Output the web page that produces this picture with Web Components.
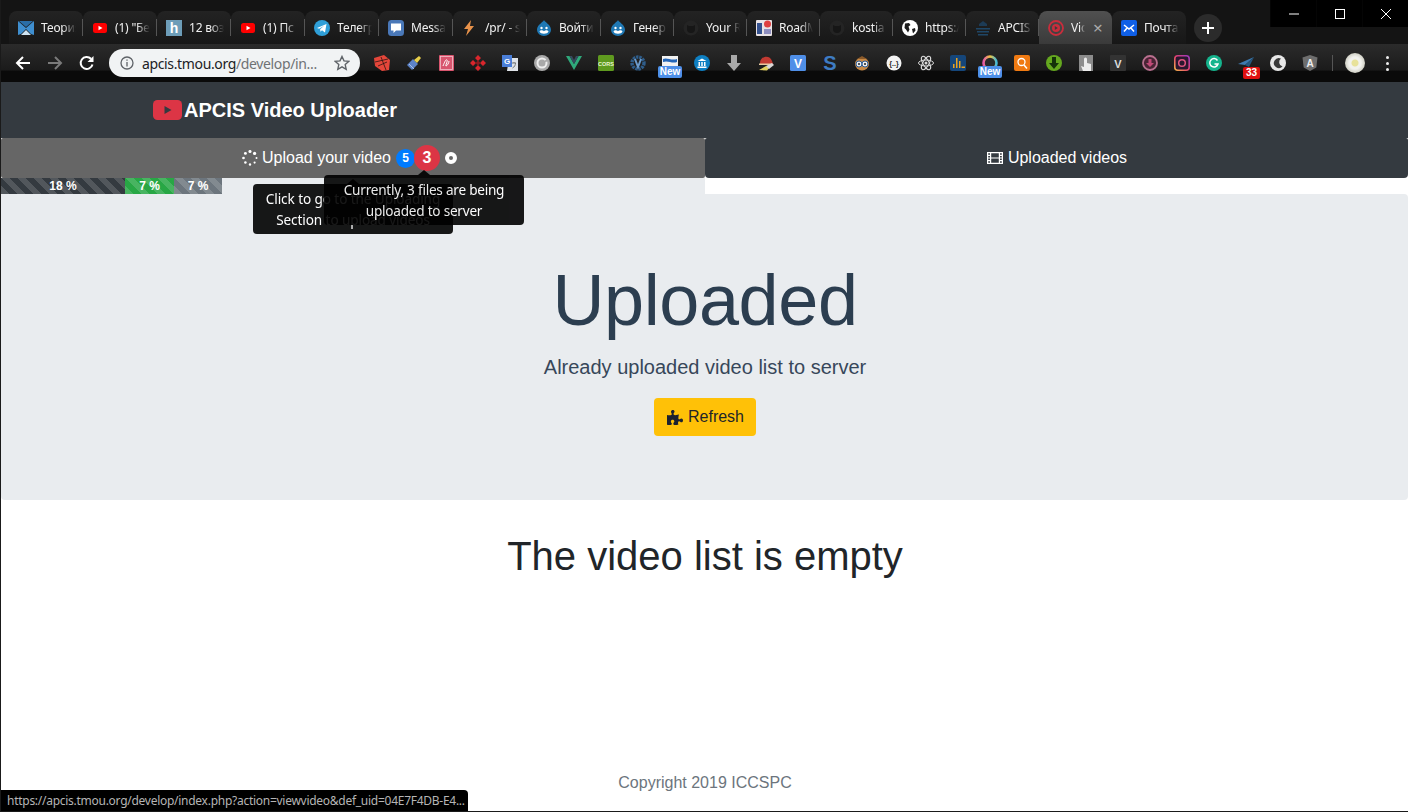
<!DOCTYPE html>
<html lang="en">
<head>
<meta charset="utf-8">
<title>APCIS Video Uploader</title>
<style>
  html, body { margin: 0; height: 100%; background: #fff; overflow: hidden; }
  body { font-family: "Liberation Sans", Arial, sans-serif; }
</style>
</head>
<body>
<app-window>
  <browser-chrome></browser-chrome>
  <site-navbar></site-navbar>
  <upload-tabs></upload-tabs>
  <hero-panel>
    <span slot="title">Uploaded</span>
    <span slot="lead">Already uploaded video list to server</span>
  </hero-panel>
  <empty-list>The video list is empty</empty-list>
  <site-footer>Copyright 2019 ICCSPC</site-footer>
  <status-bubble>https://apcis.tmou.org/develop/index.php?action=viewvideo&amp;def_uid=04E7F4DB-E4...</status-bubble>
</app-window>

<script>
// favicons of the tab strip
var FAVICONS = {
  mix: '<path d="M0 1l8 7 8-7v14l-3-1-5-5-5 5-3 1z" fill="#3f8fd0"/><path d="M1 1h14L8 7z" fill="#2a6ea8"/><path d="M3 15l5-5 5 5z" fill="#cfe4f2"/>',
  yt: '<rect x="1" y="3" width="14" height="10" rx="2.5" fill="#f00"/><path d="M6.5 5.8L10.5 8l-4 2.2z" fill="#fff"/>',
  h: '<rect width="16" height="16" fill="#6d9db8"/><text x="8" y="13" text-anchor="middle" font-family="Liberation Sans" font-weight="700" font-size="14" fill="#fff">h</text>',
  tg: '<circle cx="8" cy="8" r="8" fill="#2f9fd8"/><path d="M3 8l9.5-4-1.5 8.500-3-2.200-1.500 1.500-.4-2.600 4-3.500-5 3z" fill="#fff"/>',
  msg: '<rect width="16" height="16" rx="3.500" fill="#4a78b8"/><path d="M3 3.500h10v7H8l-2.500 2.500v-2.500H3z" fill="#fff"/>',
  bolt: '<path d="M9 0L2 9h4l-2 7 8-10H8z" fill="#e8924a"/>',
  drupal: '<path d="M8 0c1 2.500 7 4.500 7 10a7 6 0 0 1-14 0C1 4.500 7 2.500 8 0z" fill="#1f78b4"/><path d="M3.500 11.500c1.500-2 3.500-1 4.500-.3 1-.7 3-1.700 4.500.3-1 3-8 3-9 0z" fill="#fff"/><circle cx="5.500" cy="8" r="1.200" fill="#fff"/><circle cx="10.500" cy="8" r="1.200" fill="#fff"/>',
  gh: '<circle cx="8" cy="8" r="7.500" fill="#242424"/><path d="M4 5l2 1h4l2-1v4a4 4 0 0 1-8 0z" fill="#161616"/>',
  road: '<rect width="16" height="16" rx="1" fill="#e9e3e6"/><rect x="1" y="3" width="5" height="11" fill="#35528f"/><rect x="8" y="9" width="7" height="5" fill="#8f8fc0"/><circle cx="11.500" cy="4" r="3.500" fill="#e04040"/>',
  globe: '<circle cx="8" cy="8" r="8" fill="#fff"/><path d="M3 3.500l4-.5 1.500 2-2 1.500 1 3-1.500 3-2-3-1.500-1.500zM10 9l3-1 .5 2.500-2.500 3z" fill="#1b1b1b"/>',
  apcis: '<path d="M8 1l4 3v2H4V4z" fill="#1d3b55"/><path d="M1 8h14v1.500H1zM2 11h12v1.500H2zM3 14h10v1.500H3z" fill="#1f4666"/>',
  vid: '<circle cx="8" cy="8" r="7" fill="none" stroke="#c92d3c" stroke-width="1.800"/><circle cx="8" cy="8" r="4" fill="#c92d3c"/><path d="M6.800 6l3 2-3 2z" fill="#3b3b3b"/>',
  mail: '<rect width="16" height="16" rx="2" fill="#0f5fe6"/><path d="M3 5l5 4 5-4M3 11.500l3.300-3.800M13 11.500L9.700 7.700" fill="none" stroke="#fff" stroke-width="1.500"/>'
}

// toolbar extension icons, 16px box unless noted
var EXTENSIONS = {
  laravel: '<path d="M0 3l10-3 6 5-1 10-7 1-7-5z" fill="#e5463a"/><path d="M1 7l13-3M4 11l9-4M7 2l5 13" stroke="#2a1512" stroke-width=".8" fill="none"/>',
  brush: '<path d="M1 10l6-6 5 5-6 6z" fill="#5d83c8"/><path d="M8 5l5-4 2 2-4 5z" fill="#e8cf4a"/><path d="M3 9l5 5" stroke="#a9c0e8" stroke-width="1"/>',
  pink: '<rect x="1" y="0" width="15" height="16" rx="1" fill="#d8556e"/><rect x="2.500" y="1.500" width="12" height="13" fill="none" stroke="#f2c3cc" stroke-width=".8"/><path d="M5 11c2-5 3-7 4-6s-2 6-1 6 3-3 3-5" fill="none" stroke="#fff" stroke-width="1"/>',
  diamonds: '<path d="M8 0l3 3-3 3-3-3zM3 5l3 3-3 3-3-3zM13 5l3 3-3 3-3-3zM8 10l3 3-3 3-3-3z" fill="#d9262c"/><path d="M8 5.500L10.500 8 8 10.500 5.500 8z" fill="#8e1a1e"/>',
  translate: '<path d="M7 3h9v13H5z" fill="#dfe3e8"/><rect y="0" width="10" height="12" fill="#4a7ed8"/><text x="5" y="9" font-family="Liberation Sans" font-size="8" font-weight="700" text-anchor="middle" fill="#fff">G</text><path d="M10 8h4M12 7v1M10.500 13c2-1 3-3 3-5" stroke="#777" fill="none"/>',
  greyc: '<circle cx="8" cy="8" r="8" fill="#a9a9a9"/><circle cx="8" cy="8" r="4.500" fill="none" stroke="#eee" stroke-width="2"/><path d="M8 8l6-5 1 3z" fill="#a9a9a9"/>',
  vue: '<path d="M0 1h3.500L8 9l4.500-8H16L8 15z" fill="#2fa87a"/><path d="M3.500 1h2.500L8 5l2-4h2.500L8 9z" fill="#35495e"/>',
  cors: '<rect width="16" height="16" rx="1.500" fill="#5f9a1f"/><text x="8" y="10.500" text-anchor="middle" font-family="Liberation Sans" font-size="5.500" font-weight="700" fill="#e8f5d0">CORS</text>',
  gear: '<circle cx="8" cy="8" r="6" fill="none" stroke="#2f5d8a" stroke-width="3.400" stroke-dasharray="2.400 .8"/><path d="M5 4l3 8 3-8" fill="none" stroke="#6b9bcc" stroke-width="2"/>',
  sbox: '<rect x="0" y="1" width="16" height="11" fill="#f1f1f1"/><path d="M1 4c4-2 8 2 14 0v3C10 9 6 5 1 7z" fill="#2466b8"/>',
  bank: '<circle cx="8" cy="8" r="8" fill="#0e7fc2"/><path d="M3.500 6L8 3.500 12.500 6zM4.500 7h1.500v4H4.500zM7.250 7h1.500v4h-1.500zM10 7h1.500v4H10zM3.500 11.500h9V13h-9z" fill="#fff"/>',
  down: '<path d="M5 0h6v8h4l-7 8-7-8h4z" fill="#a9a9a9"/>',
  hat: '<path d="M2 8C2 1 12-1 14 6l1 3H2z" fill="#c23a32"/><path d="M1 8.500h13V10H1z" fill="#e8c8a0"/><path d="M1 15l7-4 4 1-3 3.500z" fill="#e0d060"/><path d="M8 11l6-3 2 2-5 4z" fill="#d8d8d8"/>',
  vbox: '<rect width="16" height="16" rx="1.500" fill="#4f8fe8"/><text x="8" y="12.500" text-anchor="middle" font-family="Liberation Sans" font-size="12" font-weight="700" fill="#fff">V</text>',
  sblue: '<text x="8" y="15" text-anchor="middle" font-family="Liberation Sans" font-size="20" font-weight="700" fill="#3e7cc4">S</text>',
  owl: '<ellipse cx="8" cy="9" rx="7" ry="6.500" fill="#c98a45"/><path d="M3 4l5-3 5 3z" fill="#8a5a2a"/><circle cx="5" cy="9" r="3" fill="#eee" stroke="#2a5d9a"/><circle cx="11" cy="9" r="3" fill="#eee" stroke="#2a5d9a"/><circle cx="5" cy="9" r="1" fill="#222"/><circle cx="11" cy="9" r="1" fill="#222"/>',
  dots: '<circle cx="8" cy="8" r="7.500" fill="#f4f4f4"/><text x="8" y="10.500" text-anchor="middle" font-family="Liberation Sans" font-size="7" font-weight="700" fill="#222">{..}</text>',
  atom: '<g fill="none" stroke="#d8d8d8" stroke-width="1"><ellipse cx="8" cy="8" rx="7.500" ry="3"/><ellipse cx="8" cy="8" rx="7.500" ry="3" transform="rotate(60 8 8)"/><ellipse cx="8" cy="8" rx="7.500" ry="3" transform="rotate(120 8 8)"/></g><circle cx="8" cy="8" r="1.500" fill="#d8d8d8"/>',
  chart: '<rect width="16" height="16" rx="2" fill="#15467a"/><path d="M3 13V9h1.500v4zM6 13V3h1.500v10zM9 13V6h1.500v7zM11.500 13v-1.500H15V13z" fill="#e9a21f"/>',
  rainbow: '<defs><linearGradient id="rb" x1="0" y1="0" x2="1" y2="0"><stop offset="0" stop-color="#e35aa8"/><stop offset=".5" stop-color="#f2c640"/><stop offset="1" stop-color="#45b8d8"/></linearGradient></defs><circle cx="8" cy="8" r="6.500" fill="#2a2a2a" stroke="url(#rb)" stroke-width="2.600"/>',
  search: '<rect width="16" height="16" rx="2" fill="#f07a12"/><circle cx="7.500" cy="7" r="3.500" fill="none" stroke="#fff" stroke-width="1.300"/><path d="M10 10l3 3.500" stroke="#fff" stroke-width="1.500"/>',
  greend: '<circle cx="8" cy="8" r="8" fill="#65a81f"/><path d="M6 2h4v6h3l-5 6-5-6h3z" fill="#15320a"/>',
  hand: '<rect x="1" y="0" width="14" height="16" fill="#8c8c8c"/><path d="M6 4a1.500 1.500 0 0 1 3 0v4l4 1v7H5l-2-5 3 1z" fill="#ececec"/>',
  vdark: '<rect width="16" height="16" rx="1" fill="#333"/><text x="8" y="12.500" text-anchor="middle" font-family="Liberation Sans" font-size="11" font-weight="700" fill="#ddd">V</text>',
  pinkd: '<circle cx="8" cy="8" r="7" fill="#4a2435" stroke="#b9708f" stroke-width="1.800"/><path d="M6.500 4h3v4H12l-4 4-4-4h2.500z" fill="#c24a78"/>',
  insta: '<rect x=".8" y=".8" width="14.400" height="14.400" rx="3" fill="#2b1730" stroke="url(#ig)" stroke-width="1.600"/><circle cx="8" cy="8" r="3.300" fill="none" stroke="#e0557f" stroke-width="1.500"/><defs><linearGradient id="ig" x1="0" y1="1" x2="1" y2="0"><stop offset="0" stop-color="#f5b04a"/><stop offset=".5" stop-color="#e0406f"/><stop offset="1" stop-color="#9a3ac0"/></linearGradient></defs>',
  gram: '<circle cx="8" cy="8" r="8" fill="#15b48d"/><path d="M11.500 5.500a4.200 4.200 0 1 0 .5 3.500H8.500" fill="none" stroke="#fff" stroke-width="1.500"/>',
  plane: '<path d="M0 9l16-7-9 8z" fill="#3d7ab0"/><path d="M7 10l9-8-5 10z" fill="#24577f"/>',
  moon: '<circle cx="8" cy="8" r="8" fill="#e8e8e8"/><path d="M11 3.500a5 5 0 1 0 1.500 8 4.500 4.500 0 0 1-1.500-8z" fill="#3a3a3a"/>',
  ng: '<path d="M8 0l7.500 2.600-1.200 9.800L8 16l-6.300-3.600L.5 2.600z" fill="#6e6e6e"/><text x="8" y="11.500" text-anchor="middle" font-family="Liberation Sans" font-size="10" font-weight="700" fill="#eee">A</text>'
}

var EXT_ROW = ['laravel', 'brush', 'pink', 'diamonds', 'translate', 'greyc', 'vue', 'cors', 'gear', 'sbox', 'bank', 'down', 'hat', 'vbox', 'sblue', 'owl', 'dots', 'atom', 'chart', 'rainbow', 'search', 'greend', 'hand', 'vdark', 'pinkd', 'insta', 'gram', 'plane', 'moon', 'ng']

var TABS = [
  ['mix', 'Теория'], ['yt', '(1) "Бе'], ['h', '12 воз'], ['yt', '(1) Пс'], ['tg', 'Телегр'], ['msg', 'Messa'],
  ['bolt', '/pr/ - s'], ['drupal', 'Войти'], ['drupal', 'Генер'], ['gh', 'Your R'], ['road', 'RoadM'], ['gh', 'kostia'],
  ['globe', 'https:/'], ['apcis', 'APCIS'], ['vid', 'Vic'], ['mail', 'Почта']
]

class TabItem extends HTMLElement {
  constructor () {
    super()
    var icon = FAVICONS[this.getAttribute('icon')] || ''
    this.attachShadow({ mode: 'open' }).innerHTML = `
      <style>
        :host {
          display: flex;
          align-items: center;
          box-sizing: border-box;
          width: 74px;
          height: 33px;
          padding-left: 9px;
          gap: 7px;
          position: relative;
          border-radius: 8px 8px 0 0;
          background: linear-gradient(#232323, #171717);
          color: #f0f0f0;
          font-size: 12px;
          letter-spacing: -.2px;
          font-family: "Noto Sans", sans-serif;
          overflow: hidden;
        }
        :host([narrow]) { width: 73px; }
        :host::after {
          content: "";
          position: absolute;
          right: 0;
          top: 8px;
          height: 17px;
          width: 1px;
          background: #555;
        }
        :host([active]) {
          background: linear-gradient(#505050, #3a3a3a);
        }
        :host([active])::after, :host([last])::after { display: none; }
        svg { width: 16px; height: 16px; flex: none; }
        .label {
          flex: 1;
          min-width: 0;
          margin-right: 7px;
          overflow: hidden;
          white-space: nowrap;
          -webkit-mask-image: linear-gradient(90deg, #000 62%, transparent);
          mask-image: linear-gradient(90deg, #000 62%, transparent);
        }
        :host([active]) .label { flex: none; width: 14px; margin-right: 0; }
        .close { display: none; color: #aaa; font-size: 17px; line-height: 1; margin-left: 1px; }
        :host([active]) .close { display: block; }
      </style>
      <svg viewBox="0 0 16 16">${icon}</svg>
      <span class="label"><slot></slot></span>
      <span class="close">×</span>`
  }
}
customElements.define('tab-item', TabItem)

class ExtIcon extends HTMLElement {
  constructor () {
    super()
    var name = this.getAttribute('name')
    var badge = this.getAttribute('badge')
    this.attachShadow({ mode: 'open' }).innerHTML = `
      <style>
        :host { display: flex; flex: none; width: 32px; height: 28px; align-items: center; justify-content: center; position: relative; }
        svg { width: 16px; height: 16px; display: block; overflow: visible; }
        .badge {
          position: absolute;
          left: 4px;
          bottom: -1px;
          width: 24px;
          height: 12px;
          background: #4d8fe8;
          color: #fff;
          font: 700 10px/12px "Liberation Sans", sans-serif;
          text-align: center;
          border-radius: 2px;
        }
        .badge.count {
          left: 13px;
          bottom: -2px;
          width: 17px;
          background: #e01010;
        }
      </style>
      <svg viewBox="0 0 16 16">${EXTENSIONS[name] || ''}</svg>
      ${badge ? `<span class="badge ${badge === 'New' ? '' : 'count'}">${badge}</span>` : ''}`
  }
}
customElements.define('ext-icon', ExtIcon)

class BrowserChrome extends HTMLElement {
  constructor () {
    super()
    var tabs = TABS.map(function (t, i) {
      var extra = (t[1] === 'Vic' ? ' active' : '') + (i === TABS.length - 1 ? ' last' : '') + (i >= 8 && i <= 14 ? ' narrow' : '')
      return `<tab-item icon="${t[0]}"${extra}>${t[1]}</tab-item>`
    }).join('')
    var exts = EXT_ROW.map(function (n) {
      var badge = (n === 'sbox' || n === 'rainbow') ? 'New' : (n === 'plane' ? '33' : '')
      return `<ext-icon name="${n}"${badge ? ` badge="${badge}"` : ''}></ext-icon>`
    }).join('')
    this.attachShadow({ mode: 'open' }).innerHTML = `
      <style>
        :host { display: block; height: 82px; background: #0e0e0e; color: #fff; }
        .strip { display: flex; height: 44px; padding-left: 8px; background: #141414; align-items: flex-start; }
        .tabs { display: flex; margin-top: 11px; }
        .plus {
          width: 28px; height: 28px; margin: 14px 0 0 8px; border-radius: 50%;
          background: #2b2b2b; display: flex; align-items: center; justify-content: center; flex: none;
        }
        .win { margin-left: auto; display: flex; height: 27px; background: #050505; flex: none; }
        .win span { width: 45px; height: 27px; display: flex; align-items: center; justify-content: center; margin-left: 1px; background: #000; }
        .bar {
          display: flex; align-items: center; height: 38px; padding-left: 6px; box-sizing: border-box;
          background: linear-gradient(#2b2b2b 0, #1b1b1b 68%, #0a0a0a 72%, #0a0a0a 100%);
        }
        .btn { width: 32px; height: 36px; display: flex; align-items: center; justify-content: center; flex: none; }
        .omni {
          width: 251px; height: 28px; margin: 0 6px; background: #f1f3f4; border-radius: 14px;
          display: flex; align-items: center; box-sizing: border-box; padding: 0 10px 0 11px; flex: none;
          font: 14px "Noto Sans", sans-serif; color: #6f7275;
        }
        .omni b { font-weight: 400; color: #202124; }
        .url { margin-left: 8px; flex: 1; white-space: nowrap; overflow: hidden; letter-spacing: -.36px; }
        .sep { width: 1px; height: 16px; background: #555; margin: 0 0 0 6px; flex: none; }
        .avatar {
          width: 20px; height: 20px; border-radius: 50%; margin-left: 12px; flex: none;
          background: radial-gradient(circle, #e8e29a 0 3px, #f2f2ee 4px 6px, #cfcfc4 10px);
        }
        .menu { width: 3px; margin-left: 21px; display: grid; gap: 3px; flex: none; }
        .menu i { width: 3px; height: 3px; border-radius: 50%; background: #eee; }
      </style>
      <div class="strip">
        <div class="tabs">${tabs}</div>
        <div class="plus"><svg width="14" height="14" viewBox="0 0 14 14"><path d="M7 1v12M1 7h12" stroke="#fff" stroke-width="2"/></svg></div>
        <div class="win">
          <span><svg width="12" height="12" viewBox="0 0 12 12"><path d="M1 6h10" stroke="#fff"/></svg></span>
          <span><svg width="12" height="12" viewBox="0 0 12 12"><rect x="1.500" y="1.500" width="9" height="9" fill="none" stroke="#fff"/></svg></span>
          <span><svg width="12" height="12" viewBox="0 0 12 12"><path d="M1 1l10 10M11 1L1 11" stroke="#fff"/></svg></span>
        </div>
      </div>
      <div class="bar">
        <span class="btn"><svg width="16" height="16" viewBox="0 0 16 16"><path d="M15 8H2M8 2L2 8l6 6" fill="none" stroke="#fff" stroke-width="2"/></svg></span>
        <span class="btn"><svg width="16" height="16" viewBox="0 0 16 16"><path d="M1 8h13M8 2l6 6-6 6" fill="none" stroke="#7a7a7a" stroke-width="2"/></svg></span>
        <span class="btn"><svg width="16" height="16" viewBox="0 0 16 16"><path d="M13.500 9.500A6 6 0 1 1 12 3.800" fill="none" stroke="#fff" stroke-width="2"/><path d="M14.500 1v6h-6z" fill="#fff"/></svg></span>
        <div class="omni">
          <svg width="14" height="14" viewBox="0 0 14 14" style="flex:none"><circle cx="7" cy="7" r="6" fill="none" stroke="#5f6368" stroke-width="1.300"/><path d="M7 6v4.500M7 3.500v1.300" stroke="#5f6368" stroke-width="1.300"/></svg>
          <span class="url"><b>apcis.tmou.org</b>/develop/in...</span>
          <svg width="16" height="16" viewBox="0 0 16 16" style="flex:none"><path d="M8 1.500l2 4.400 4.700.5-3.500 3.200 1 4.700L8 11.900l-4.200 2.400 1-4.700L1.300 6.400 6 5.900z" fill="none" stroke="#5f6368" stroke-width="1.400"/></svg>
        </div>
        ${exts}
        <span class="sep"></span>
        <span class="avatar"></span>
        <span class="menu"><i></i><i></i><i></i></span>
      </div>`
  }
}
customElements.define('browser-chrome', BrowserChrome)

class SiteNavbar extends HTMLElement {
  constructor () {
    super()
    this.attachShadow({ mode: 'open' }).innerHTML = `
      <style>
        :host {
          display: flex; align-items: center; gap: 2px; height: 56px; padding-left: 152px;
          background: #343a40; color: #fff; font-size: 20px; font-weight: 700;
        }
        svg { display: block; }
      </style>
      <svg width="29" height="20" viewBox="0 0 29 20"><rect width="29" height="20" rx="4.500" fill="#dc3545"/><path d="M11.500 6l7 4-7 4z" fill="#343a40"/></svg>
      <span>APCIS Video Uploader</span>`
  }
}
customElements.define('site-navbar', SiteNavbar)

class HoverTip extends HTMLElement {
  constructor () {
    super()
    this.attachShadow({ mode: 'open' }).innerHTML = `
      <style>
        :host {
          position: absolute;
          box-sizing: border-box;
          width: 200px;
          padding: 4px 8px;
          background: #000;
          opacity: .9;
          border-radius: 4px;
          color: #fff;
          font: 13.600px/21px "Noto Sans", sans-serif;
          letter-spacing: -.24px;
          text-align: center;
        }
        :host::before {
          content: "";
          position: absolute;
          top: -5px;
          left: var(--arrow, 50%);
          margin-left: -6px;
          border: solid transparent;
          border-width: 0 6px 5px;
          border-bottom-color: #000;
        }
      </style>
      <slot></slot>`
  }
}
customElements.define('hover-tip', HoverTip)

class ProgressBits extends HTMLElement {
  constructor () {
    super()
    this.attachShadow({ mode: 'open' }).innerHTML = `
      <style>
        :host { display: flex; height: 16px; width: 221px; color: #fff; font-size: 12px; font-weight: 700; line-height: 16px; text-align: center; }
        span {
          display: block;
          background-image: linear-gradient(45deg, rgba(255,255,255,.15) 25%, transparent 25%, transparent 50%, rgba(255,255,255,.15) 50%, rgba(255,255,255,.15) 75%, transparent 75%, transparent);
          background-size: 16px 16px;
        }
        .a { width: 124px; background-color: #343a40; }
        .b { width: 49px; background-color: #28a745; }
        .c { width: 48px; background-color: #6c757d; }
      </style>
      <span class="a">18 %</span><span class="b">7 %</span><span class="c">7 %</span>`
  }
}
customElements.define('progress-bits', ProgressBits)

class UploadTabs extends HTMLElement {
  constructor () {
    super()
    var dots = ''
    for (var i = 0; i < 8; i++) {
      var a = i * Math.PI / 4
      dots += `<circle cx="${(8 + 6.5 * Math.cos(a)).toFixed(1)}" cy="${(8 + 6.5 * Math.sin(a)).toFixed(1)}" r="${(1 + (i % 8) * .09).toFixed(2)}" fill="#fff"/>`
    }
    this.attachShadow({ mode: 'open' }).innerHTML = `
      <style>
        :host { display: grid; grid-template-columns: 704px 1fr; position: relative; }
        .tab {
          height: 40px; display: flex; align-items: center; justify-content: center; box-sizing: border-box;
          color: #fff; font-size: 16px; background: #343a40;
        }
        .tab.on { background: #666; border-radius: 2px; padding-right: 7px; }
        .tab.two { border-radius: 2px 2px 4px 4px; padding-left: 1px; }
        .tab.on > svg { margin-right: 4px; }
        .tab.two > svg { margin-right: 5px; }
        .badge {
          display: inline-flex; align-items: center; justify-content: center; border-radius: 50%;
          color: #fff; font-weight: 700; flex: none;
        }
        .blue { width: 19px; height: 19px; margin-left: 5px; background: #007bff; font-size: 12px; }
        .red { width: 26px; height: 26px; margin-left: -1px; background: #dc3545; font-size: 16px; position: relative; }
        .tab.on > .ring { margin: 0 0 0 5px; }
        .under { height: 16px; background: #e9ecef; }
        .blank { height: 16px; background: #fff; }
      </style>
      <div class="tab on">
        <svg width="16" height="16" viewBox="0 0 16 16">${dots}</svg>
        <span>Upload your video</span>
        <span class="badge blue">5</span>
        <span class="badge red">3</span>
        <svg class="ring" width="12" height="12" viewBox="0 0 12 12"><circle cx="6" cy="6" r="4" fill="none" stroke="#fff" stroke-width="4"/></svg>
      </div>
      <div class="tab two">
        <svg width="16" height="14" viewBox="0 0 16 14"><path fill="none" stroke="#fff" stroke-width="1.200" d="M.6 1.600h14.800v10.800H.6zM3.600 1.600v10.800M12.400 1.600v10.800M3.600 7h8.800M.6 4.300h3M.6 7h3M.6 9.700h3M12.400 4.300h3M12.400 7h3M12.400 9.700h3"/></svg>
        <span>Uploaded videos</span>
      </div>
      <div class="under"><progress-bits></progress-bits></div>
      <div class="blank"></div>
      <hover-tip style="left:252px;top:46px;letter-spacing:-.1px">Click to go to the Uploading Section to upload videos</hover-tip>
      <hover-tip style="left:323px;top:37px">Currently, 3 files are being uploaded to server</hover-tip>`
  }
}
customElements.define('upload-tabs', UploadTabs)

class HeroPanel extends HTMLElement {
  constructor () {
    super()
    this.attachShadow({ mode: 'open' }).innerHTML = `
      <style>
        :host {
          display: flex; flex-direction: column; align-items: center; box-sizing: border-box;
          height: 306px; padding: 63px 0 0 1px; background: #e9ecef; border-radius: 0 4px 4px 4px;
        }
        .title { font-size: 72px; line-height: 86px; color: #2c3e50; letter-spacing: -.4px; }
        .lead { font-size: 20px; line-height: 30px; margin-top: 9px; color: #37475a; }
        button {
          display: flex; align-items: center; gap: 5px; height: 38px; margin-top: 16px; padding: 0 12px 0 13px;
          background: #ffc107; border: 0; border-radius: 4px; color: #212529;
          font: 16px "Liberation Sans", sans-serif;
        }
      </style>
      <div class="title"><slot name="title"></slot></div>
      <div class="lead"><slot name="lead"></slot></div>
      <button>
        <svg width="16" height="15" viewBox="0 0 576 512" preserveAspectRatio="none"><path d="M519.442 288.651c-41.519 0-59.5 31.593-82.058 31.593C377.409 320.244 432 144 432 144s-196.288 80-196.288-3.297c0-35.827 36.288-46.25 36.288-85.985C272 19.216 243.885 0 210.539 0c-34.654 0-66.366 18.891-66.366 56.346 0 41.364 31.711 59.277 31.711 81.75C175.885 207.719 0 166.758 0 166.758v333.237s178.635 41.047 178.635-28.662c0-22.473-40-40.107-40-81.471 0-37.456 29.25-56.346 63.577-56.346 33.673 0 61.788 19.216 61.788 54.717 0 39.735-36.288 50.158-36.288 85.985 0 60.803 129.675 25.73 181.23 25.73 0 0-34.725-120.101 25.827-120.101 35.962 0 46.423 36.152 86.308 36.152C556.712 416 576 387.99 576 354.443c0-34.199-18.962-65.792-56.558-65.792z" fill="#1c2230"/></svg>
        Refresh
      </button>`
  }
}
customElements.define('hero-panel', HeroPanel)

class EmptyList extends HTMLElement {
  constructor () {
    super()
    this.attachShadow({ mode: 'open' }).innerHTML = `
      <style>
        :host { display: block; margin-top: 32px; padding-left: 1px; font-size: 40px; line-height: 48px; color: #212529; text-align: center; }
      </style>
      <slot></slot>`
  }
}
customElements.define('empty-list', EmptyList)

class SiteFooter extends HTMLElement {
  constructor () {
    super()
    this.attachShadow({ mode: 'open' }).innerHTML = `
      <style>
        :host { display: block; margin-top: auto; padding: 0 0 19px 1px; font-size: 16px; line-height: 18px; color: #6c757d; text-align: center; }
      </style>
      <slot></slot>`
  }
}
customElements.define('site-footer', SiteFooter)

class StatusBubble extends HTMLElement {
  constructor () {
    super()
    this.attachShadow({ mode: 'open' }).innerHTML = `
      <style>
        :host {
          position: absolute; left: 0; bottom: 0; width: 467px; height: 21px; box-sizing: border-box;
          padding-left: 6px; background: #000; color: #b5b5b5; border-radius: 0 4px 0 0;
          font: 12px/22px "Noto Sans", sans-serif; white-space: nowrap; overflow: hidden; letter-spacing: -.27px;
        }
      </style>
      <slot></slot>`
  }
}
customElements.define('status-bubble', StatusBubble)

class AppWindow extends HTMLElement {
  constructor () {
    super()
    this.attachShadow({ mode: 'open' }).innerHTML = `
      <style>
        :host {
          display: flex; flex-direction: column; position: relative; box-sizing: border-box;
          height: 812px; width: 1408px; overflow: hidden; background: #fff;
          border-left: 1px solid #1a1a1a; border-bottom: 1px solid #1a1a1a;
        }
      </style>
      <slot></slot>`
  }
}
customElements.define('app-window', AppWindow)
</script>
</body>
</html>
